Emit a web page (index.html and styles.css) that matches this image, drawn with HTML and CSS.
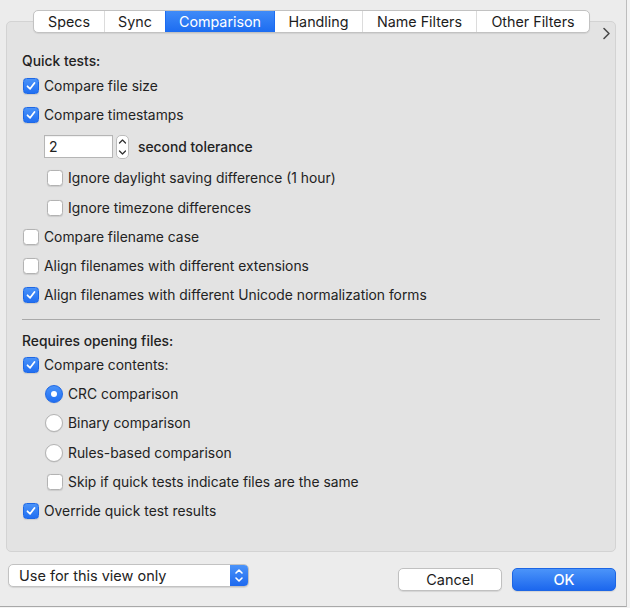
FILE: index.html
```html
<!DOCTYPE html>
<html>
<head>
<meta charset="utf-8">
<link rel="stylesheet" href="styles.css">
</head>
<body>
<div class="window">
  <div class="tabbar">
    <div class="tab">Specs</div>
    <div class="tab">Sync</div>
    <div class="tab selected">Comparison</div>
    <div class="tab">Handling</div>
    <div class="tab">Name Filters</div>
    <div class="tab">Other Filters</div>
  </div>
  <div class="panel">
    <svg class="more" width="9" height="13" viewBox="0 0 9 13"><path d="M2 1.5 L7 6.5 L2 11.5" fill="none" stroke="#4a4a4a" stroke-width="1.6" stroke-linecap="round" stroke-linejoin="round"/></svg>

    <div class="section-label">Quick tests:</div>
    <div class="row"><span class="cb on"><svg viewBox="0 0 16 16"><path d="M4 8.3 L7 11.2 L12 4.5" fill="none" stroke="#fff" stroke-width="2" stroke-linecap="round" stroke-linejoin="round"/></svg></span>Compare file size</div>
    <div class="row"><span class="cb on"><svg viewBox="0 0 16 16"><path d="M4 8.3 L7 11.2 L12 4.5" fill="none" stroke="#fff" stroke-width="2" stroke-linecap="round" stroke-linejoin="round"/></svg></span>Compare timestamps</div>
    <div class="row tolerance">
      <div class="num-input">2</div>
      <div class="stepper"><svg width="13" height="24" viewBox="0 0 13 24"><path d="M3.5 8 L6.5 5 L9.5 8" fill="none" stroke="#333" stroke-width="1.3" stroke-linecap="round" stroke-linejoin="round"/><path d="M3.5 16 L6.5 19 L9.5 16" fill="none" stroke="#333" stroke-width="1.3" stroke-linecap="round" stroke-linejoin="round"/></svg></div>
      <span class="tol-label">second tolerance</span>
    </div>
    <div class="row sub"><span class="cb"></span>Ignore daylight saving difference (1 hour)</div>
    <div class="row sub"><span class="cb"></span>Ignore timezone differences</div>
    <div class="row"><span class="cb"></span>Compare filename case</div>
    <div class="row"><span class="cb"></span>Align filenames with different extensions</div>
    <div class="row"><span class="cb on"><svg viewBox="0 0 16 16"><path d="M4 8.3 L7 11.2 L12 4.5" fill="none" stroke="#fff" stroke-width="2" stroke-linecap="round" stroke-linejoin="round"/></svg></span>Align filenames with different Unicode normalization forms</div>

    <div class="separator"></div>

    <div class="section-label second">Requires opening files:</div>
    <div class="row"><span class="cb on"><svg viewBox="0 0 16 16"><path d="M4 8.3 L7 11.2 L12 4.5" fill="none" stroke="#fff" stroke-width="2" stroke-linecap="round" stroke-linejoin="round"/></svg></span>Compare contents:</div>
    <div class="row sub-radio"><span class="radio on"></span>CRC comparison</div>
    <div class="row sub-radio"><span class="radio"></span>Binary comparison</div>
    <div class="row sub-radio"><span class="radio"></span>Rules-based comparison</div>
    <div class="row sub"><span class="cb"></span>Skip if quick tests indicate files are the same</div>
    <div class="row"><span class="cb on"><svg viewBox="0 0 16 16"><path d="M4 8.3 L7 11.2 L12 4.5" fill="none" stroke="#fff" stroke-width="2" stroke-linecap="round" stroke-linejoin="round"/></svg></span>Override quick test results</div>
  </div>

  <div class="footer">
    <div class="popup">
      <span class="popup-text">Use for this view only</span>
      <span class="popup-arrow"><svg width="18" height="23" viewBox="0 0 18 23"><path d="M6 9 L9 6 L12 9" fill="none" stroke="#fff" stroke-width="1.6" stroke-linecap="round" stroke-linejoin="round"/><path d="M6 14 L9 17 L12 14" fill="none" stroke="#fff" stroke-width="1.6" stroke-linecap="round" stroke-linejoin="round"/></svg></span>
    </div>
    <div class="spacer"></div>
    <div class="btn">Cancel</div>
    <div class="btn primary">OK</div>
  </div>
</div>
</body>
</html>
```

FILE: styles.css
```css
* { box-sizing: border-box; }

html, body {
  margin: 0;
  padding: 0;
  background: #f3f3f3;
}

body {
  width: 630px;
  height: 608px;
  overflow: hidden;
  font-family: Inter, "Liberation Sans", sans-serif;
  font-size: 13.85px;
  color: #222;
}

.window {
  width: 627px;
  height: 607px;
  background: #ececec;
  border-right: 1px solid #bdbdbd;
  border-bottom: 1px solid #a8a8a8;
  padding-top: 10px;
  display: flex;
  flex-direction: column;
}

/* Segmented tab control */
.tabbar {
  position: relative;
  z-index: 1;
  display: grid;
  grid-template-columns: 70px 61px 109px 88px 114px 113px;
  align-self: flex-start;
  margin-left: 33px;
  margin-bottom: -12px;
  height: 23px;
  background: #fff;
  border: 1px solid #c2c2c2;
  border-radius: 5px;
  box-shadow: 0 1px 1px rgba(0,0,0,0.08);
  overflow: hidden;
}

.tab {
  display: flex;
  align-items: center;
  justify-content: center;
  font-size: 14.3px;
  color: #1c1c1c;
  border-left: 1px solid #dcdcdc;
  white-space: nowrap;
}

.tab:first-child { border-left: none; }

.tab.selected {
  background: linear-gradient(#3f8bf8, #1c6cf1);
  color: #fff;
  border-left-color: #1c6cf1;
}

.tab.selected + .tab { border-left-color: #1c6cf1; }

/* Panel */
.panel {
  position: relative;
  margin-left: 6px;
  width: 610px;
  height: 531px;
  background: #e3e3e3;
  border: 1px solid #d3d3d3;
  border-radius: 5px;
  padding: 29px 15px 0 16px;
  display: flex;
  flex-direction: column;
}

.more {
  position: absolute;
  top: 5px;
  right: 4px;
}

.section-label {
  height: 20px;
  display: flex;
  align-items: center;
  margin-left: -1px;
  font-weight: 500;
}

.section-label.second {
  height: 19px;
  margin-top: 11px;
}

.row {
  height: 29.3px;
  display: flex;
  align-items: center;
  white-space: nowrap;
}

.row.sub { padding-left: 24px; }
.row.sub-radio { padding-left: 22px; }

.cb {
  width: 16px;
  height: 16px;
  flex: none;
  margin-right: 5px;
  border-radius: 3.5px;
  background: #fff;
  border: 1px solid #b3b3b3;
  box-shadow: 0 0.5px 1px rgba(0,0,0,0.1);
}

.cb.on {
  background: linear-gradient(#4a93f9, #216ff2);
  border: 1px solid #1e68e6;
}

.cb svg {
  display: block;
  width: 14px;
  height: 14px;
}

.radio {
  width: 18px;
  height: 18px;
  flex: none;
  margin-right: 5px;
  border-radius: 50%;
  background: #fff;
  border: 1px solid #b3b3b3;
  box-shadow: 0 0.5px 1px rgba(0,0,0,0.12);
  display: flex;
  align-items: center;
  justify-content: center;
}

.radio.on {
  background: linear-gradient(#4a93f9, #216ff2);
  border-color: #1e68e6;
}

.radio.on::after {
  content: "";
  width: 6px;
  height: 6px;
  border-radius: 50%;
  background: #fff;
}

.row.tolerance {
  height: 34px;
  padding-left: 21px;
}

.num-input {
  width: 69px;
  height: 23px;
  background: #fff;
  border: 1px solid #b5b5b5;
  box-shadow: inset 0 1px 1px rgba(0,0,0,0.06);
  padding-left: 4px;
  display: flex;
  align-items: center;
  font-size: 14px;
}

.stepper {
  width: 13px;
  height: 24px;
  margin-left: 3px;
  background: #fff;
  border: 1px solid #bcbcbc;
  border-radius: 5px;
  display: flex;
  align-items: center;
  justify-content: center;
  overflow: hidden;
}

.stepper svg { display: block; flex: none; }

.tol-label {
  margin-left: 9px;
  font-weight: 500;
}

.separator {
  height: 1px;
  margin: 9px 0 0 -1px;
  background: #a9a9a9;
}

/* Footer */
.footer {
  display: flex;
  align-items: flex-start;
  padding: 12px 10px 0 8px;
}

.popup {
  width: 241px;
  height: 23px;
  display: flex;
  background: #fff;
  border: 1px solid #c2c2c2;
  border-radius: 5px;
  box-shadow: 0 1px 1px rgba(0,0,0,0.1);
  overflow: hidden;
}

.popup-text {
  flex: 1;
  display: flex;
  align-items: center;
  padding-left: 10px;
  font-size: 14.5px;
}

.popup-arrow {
  width: 18px;
  background: linear-gradient(#4a93f9, #1e69ef);
  display: flex;
  align-items: center;
  justify-content: center;
}

.popup-arrow svg { display: block; }

.spacer { flex: 1; }

.btn {
  width: 104px;
  height: 23px;
  margin-top: 4px;
  margin-left: 10px;
  border-radius: 5px;
  display: flex;
  align-items: center;
  justify-content: center;
  font-size: 14.5px;
  background: #fff;
  border: 1px solid #c0c0c0;
  box-shadow: 0 1px 1px rgba(0,0,0,0.1);
  color: #1c1c1c;
}

.btn.primary {
  background: linear-gradient(#4b94f9, #1c67ee);
  border-color: #1d66e4;
  color: #fff;
  font-weight: 500;
}
```
